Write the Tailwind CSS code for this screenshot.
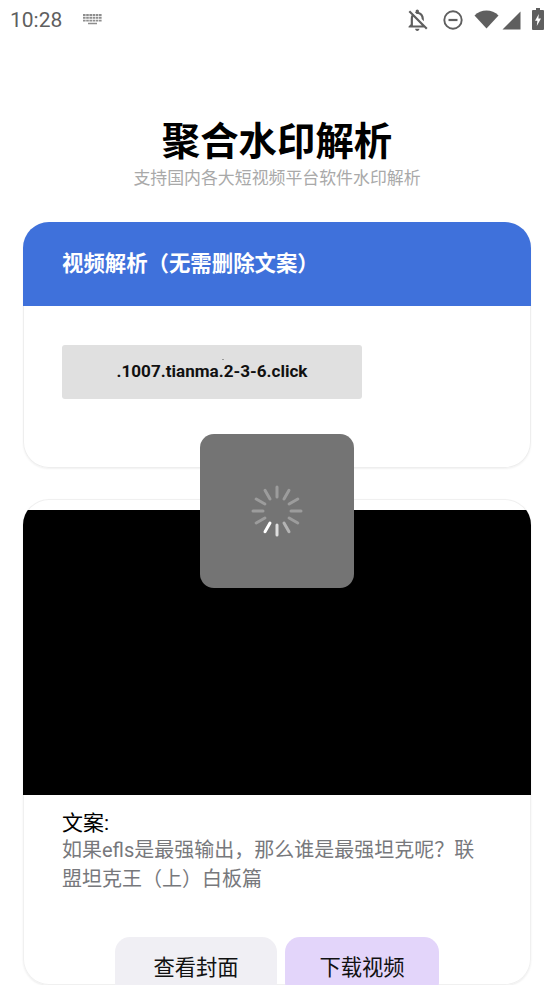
<!DOCTYPE html>
<html lang="zh-CN">
<head>
    <meta charset="UTF-8">
    <meta name="viewport" content="width=device-width, initial-scale=1.0">
    <title>聚合水印解析</title>
    <script src="https://cdn.jsdelivr.net/npm/@tailwindcss/browser@4"></script>
</head>
<body class="bg-white h-[985px] overflow-hidden relative font-['Roboto','Noto_Sans_CJK_SC',sans-serif]">
    <!-- status bar -->
    <div class="h-[40px] flex items-center pl-[10px] pr-[10px] text-[#5f5f5f]">
        <span class="text-[21px] leading-none">10:28</span>
        <svg class="ml-[21px] w-[19px] h-[11px] -mt-[1px]" viewBox="0 0 19 11" fill="none" stroke="#8e8e8e">
            <path d="M0 1H19M0 3.8H19M0 6.6H19" stroke-width="1.9" stroke-dasharray="2.6 .6"/>
            <path d="M5 9.5H14" stroke-width="1.5"/>
        </svg>
        <div class="ml-auto flex items-center">
            <svg class="w-[20px] h-[23px]" viewBox="3.5 2 18.3 21" fill="#5f5f5f">
                <path d="M12 22c1.1 0 2-.9 2-2h-4c0 1.1.9 2 2 2zm0-15.5c2.49 0 4 2.02 4 4.5v.1l2 2V11c0-3.07-1.63-5.64-4.5-6.32V4c0-.83-.67-1.5-1.5-1.5s-1.5.67-1.5 1.5v.68c-.24.06-.47.15-.69.23l1.64 1.64c.18-.02.37-.05.55-.05zM5.41 3.35L4 4.76l2.81 2.81C6.29 8.57 6 9.74 6 11v5l-2 2v1h14.24l1.74 1.74 1.41-1.41L5.41 3.35zM16 17H8v-6c0-.68.12-1.32.34-1.9L16 16.76V17z"/>
            </svg>
            <svg class="ml-[14px] w-[22px] h-[22px]" viewBox="0 0 22 22" fill="none" stroke="#5f5f5f" stroke-width="1.9">
                <circle cx="11" cy="11" r="8.7"/>
                <path d="M6.5 11h9" stroke-width="2.2"/>
            </svg>
            <svg class="ml-[10px] w-[25px] h-[20px] -mt-[2px]" viewBox="0 0 25 20" fill="#5f5f5f">
                <path d="M0.5 6.5C3.8 3.5 8 1.6 12.5 1.6S21.2 3.5 24.5 6.5L12.5 19.5z"/>
            </svg>
            <svg class="ml-[3px] w-[19px] h-[19px]" viewBox="0 0 19 19" fill="#5f5f5f">
                <path d="M18.5 0.5V18.5H0.5z"/>
            </svg>
            <svg class="ml-[11px] w-[12px] h-[22px] -mt-[2px]" viewBox="0 0 12 22" fill="#5f5f5f">
                <path fill-rule="evenodd" d="M4 0h4v2h3a1 1 0 0 1 1 1v18a1 1 0 0 1-1 1H1a1 1 0 0 1-1-1V3a1 1 0 0 1 1-1h3zM6.8 6L3 12.8h2.4L4.8 18l4.2-7.4H6.4z"/>
            </svg>
        </div>
    </div>

    <!-- title -->
    <div class="mt-[78px] text-center">
        <h1 class="text-[38.4px] leading-[48px] font-bold text-black">聚合水印解析</h1>
        <p class="text-[16.9px] leading-[24px] text-[#a9a9a9]">支持国内各大短视频平台软件水印解析</p>
    </div>

    <!-- parse card -->
    <div class="mt-[32px] mx-[23px] h-[246px] rounded-[26px] shadow-[inset_0_0_0_1px_#eeeeee,0_1px_2px_rgba(0,0,0,0.06)] overflow-hidden">
        <div class="h-[84px] bg-[#3f71db] pl-[39px] pt-[27px] text-white text-[21.4px] leading-[30px] font-semibold">视频解析（无需删除文案）</div>
        <div class="pl-[39px] pt-[39px]">
            <div class="relative w-[300px] h-[54px] bg-[#e0e0e0] rounded-[3px] flex items-center justify-center text-[17.1px] font-bold text-[#111]">
                .1007.tianma.2-3-6.click
                <span class="absolute left-[160px] top-[14px] w-[2px] h-px bg-[#999]"></span>
            </div>
        </div>
    </div>

    <!-- result card -->
    <div class="mt-[31px] mx-[23px] h-[486px] rounded-[26px] shadow-[inset_0_0_0_1px_#f0f0f0,0_1px_2px_rgba(0,0,0,0.08)] overflow-hidden">
        <div class="pt-[11px]">
            <div class="h-[285px] bg-black"></div>
        </div>
        <div class="pl-[39px] pr-[50px] pt-[15px]">
            <p class="text-[21px] leading-[26px] text-black">文案:</p>
            <p class="text-[20px] leading-[29px] text-[#77787c]">如果efls是最强输出，那么谁是最强坦克呢？联盟坦克王（上）白板篇</p>
        </div>
        <div class="mt-[43px] flex pl-[92px] gap-[8px]">
            <div class="w-[162px] h-[60px] bg-[#f0eff4] rounded-[15px] pt-[16px] text-center text-[21.3px] leading-[30px] text-[#111]">查看封面</div>
            <div class="w-[154px] h-[60px] bg-[#e3d5fa] rounded-[15px] pt-[16px] text-center text-[21.3px] leading-[30px] text-[#111]">下载视频</div>
        </div>
    </div>

    <!-- loading overlay -->
    <div class="absolute left-[200px] top-[434px] w-[154px] h-[154px] rounded-[14px] bg-[#747474] flex items-center justify-center">
        <svg class="w-[54px] h-[54px]" viewBox="-27 -27 54 54" fill="none" stroke="#9c9c9c" stroke-width="3" stroke-linecap="round">
            <path d="M0 -24V-14"/>
            <path d="M12 -20.8L7 -12.1"/>
            <path d="M20.8 -12L12.1 -7"/>
            <path d="M24 0H14"/>
            <path d="M20.8 12L12.1 7"/>
            <path d="M12 20.8L7 12.1" stroke="#b4b4b4"/>
            <path d="M0 24V14" stroke="#dedede"/>
            <path d="M-12 20.8L-7 12.1" stroke="#ffffff"/>
            <path d="M-20.8 12L-12.1 7"/>
            <path d="M-24 0H-14"/>
            <path d="M-20.8 -12L-12.1 -7"/>
            <path d="M-12 -20.8L-7 -12.1"/>
        </svg>
    </div>
</body>
</html>
